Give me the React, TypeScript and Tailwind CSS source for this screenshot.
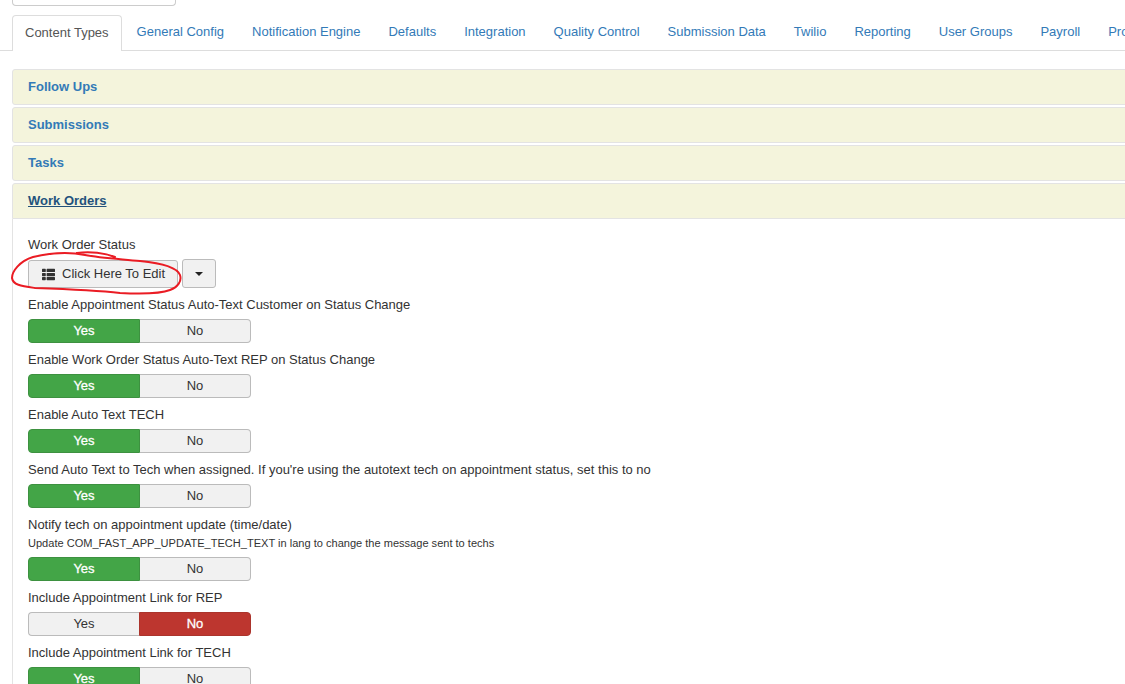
import { FaThList } from "react-icons/fa";

const tabs = [
  "General Config",
  "Notification Engine",
  "Defaults",
  "Integration",
  "Quality Control",
  "Submission Data",
  "Twilio",
  "Reporting",
  "User Groups",
  "Payroll",
  "Program",
];

const panels = ["Follow Ups", "Submissions", "Tasks"];

function Toggle({ value }: { value: boolean }) {
  return (
    <div className="flex h-[24px] w-[223px] text-[13px] leading-[22px]">
      {value ? (
        <div className="w-[112px] rounded-l-[4px] border border-[#3d9140] bg-[#43a547] text-center text-white [-webkit-text-stroke:0.3px_white]">
          Yes
        </div>
      ) : (
        <div className="w-[111px] rounded-l-[4px] border border-[#bbbbbb] border-r-0 bg-[#f1f1f1] text-center text-[#333333]">
          Yes
        </div>
      )}
      {value ? (
        <div className="flex-1 rounded-r-[4px] border border-l-0 border-[#bbbbbb] bg-[#f1f1f1] text-center text-[#333333]">
          No
        </div>
      ) : (
        <div className="flex-1 rounded-r-[4px] border border-[#ab342c] bg-[#bd362f] text-center text-white [-webkit-text-stroke:0.3px_white]">
          No
        </div>
      )}
    </div>
  );
}

function Field({ label, hint, value }: { label: string; hint?: string; value: boolean }) {
  return (
    <div className="mb-[4px]">
      <div className={`${hint ? "h-[24px]" : "h-[27px]"} text-[13px] leading-[26px] text-[#333333]`}>{label}</div>
      {hint && <div className="h-[21px] text-[11.05px] leading-[14px] text-[#333333]">{hint}</div>}
      <Toggle value={value} />
    </div>
  );
}

export default function App() {
  return (
    <div className="relative h-[684px] w-[1125px] overflow-hidden bg-white font-['Liberation_Sans',Arial,sans-serif]">
      <div className="ml-[12px] h-[6px] w-[164px] rounded-b-[4px] border border-t-0 border-[#cccccc]" />

      {/* Tabs */}
      <div className="mt-[9px] flex h-[36px] border-b border-[#dddddd] pl-[12px] whitespace-nowrap text-[13px] leading-[34px]">
        <div className="h-[36px] rounded-t-[4px] border border-b-0 border-[#dddddd] bg-white px-[12px] text-[#555555]">
          Content Types
        </div>
        {tabs.map((tab) => (
          <div key={tab} className="ml-[2px] px-[13px] text-[#337ab7]">
            {tab}
          </div>
        ))}
      </div>

      {/* Accordion */}
      <div className="mt-[18px] ml-[12px] w-[1140px] text-[13px]">
        {panels.map((panel) => (
          <div
            key={panel}
            className="mb-[2px] h-[36px] rounded-[3px] border border-[#e3e3e3] bg-[#f4f4dc] px-[15px] leading-[34px] font-bold text-[#337ab7]"
          >
            {panel}
          </div>
        ))}
        <div className="h-[36px] rounded-t-[3px] border border-[#e3e3e3] bg-[#f4f4dc] px-[15px] leading-[34px] font-bold text-[#23527c] underline">
          Work Orders
        </div>
        <div className="h-[480px] border-l border-[#e3e3e3] px-[15px] pt-[13px]">
          <div className="h-[27px] text-[13px] leading-[26px] text-[#333333]">Work Order Status</div>
          <div className="mb-[4px] flex h-[29px] gap-[4px] text-[#333333]">
            <div className="mt-[1px] flex h-[28px] w-[150px] items-center gap-[7px] rounded-[3px] border border-[#bbbbbb] bg-[#f1f1f1] pl-[13px]">
              <FaThList size={13} className="text-[#333333]" />
              Click Here To Edit
            </div>
            <div className="flex h-[29px] w-[34px] items-center justify-center rounded-[3px] border border-[#bbbbbb] bg-[#f1f1f1]">
              <span className="border-x-[4px] border-t-[4px] border-x-transparent border-t-[#222222]" />
            </div>
          </div>
          <Field label="Enable Appointment Status Auto-Text Customer on Status Change" value />
          <Field label="Enable Work Order Status Auto-Text REP on Status Change" value />
          <Field label="Enable Auto Text TECH" value />
          <Field
            label="Send Auto Text to Tech when assigned. If you're using the autotext tech on appointment status, set this to no"
            value
          />
          <Field
            label="Notify tech on appointment update (time/date)"
            hint="Update COM_FAST_APP_UPDATE_TECH_TEXT in lang to change the message sent to techs"
            value
          />
          <Field label="Include Appointment Link for REP" value={false} />
          <Field label="Include Appointment Link for TECH" value />
        </div>
      </div>

      {/* Red marker annotation */}
      <svg className="absolute top-[245px] left-[5px]" width="190" height="52" fill="none">
        <path
          d="M175 30 C172 22 155 18 135 16 C115 14 95 13 80 10 C65 7 45 8 28 12 C15 16 7 26 7 33 C8 40 16 41 30 43 C60 44 90 45 115 48 C135 49 155 49 165 45 C173 42 177 36 175 30 M72 8 C85 6 100 8 110 12"
          stroke="#ea1c24"
          strokeWidth="2"
          strokeLinecap="round"
        />
      </svg>
    </div>
  );
}
